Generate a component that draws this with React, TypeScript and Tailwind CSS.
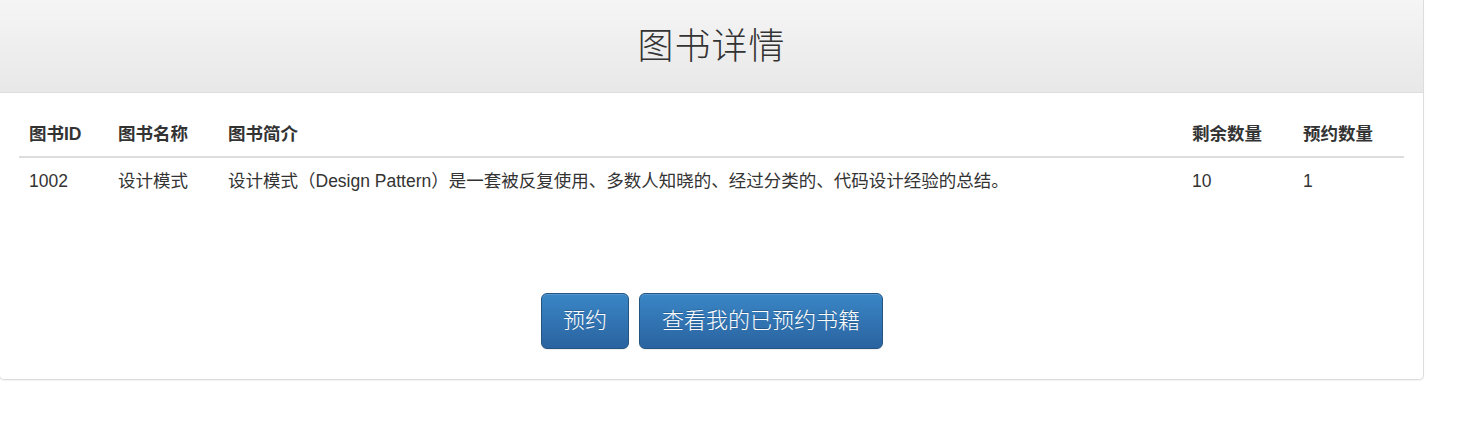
export default function App() {
  const font = "font-['Liberation_Sans','Noto_Sans_CJK_SC',sans-serif]";
  const btn =
    "h-[56px] rounded-[6px] border border-[#245580] bg-gradient-to-b from-[#3a86c6] to-[#2a63a0] text-white text-[22px] font-light leading-none [text-shadow:0_-1px_0_rgba(0,0,0,0.2)] shadow-[inset_0_1px_0_rgba(255,255,255,0.15),0_1px_1px_rgba(0,0,0,0.075)]";
  return (
    <div className={`${font} bg-white min-h-[428px] text-[#333]`}>
      <div className="ml-[-1px] w-[1425px] bg-white border border-t-0 border-[#ddd] rounded-b-[5px] shadow-[0_1px_1px_rgba(0,0,0,0.05)]">
        <div className="h-[93px] border-b border-[#ddd] bg-gradient-to-b from-[#f5f5f5] to-[#e8e8e8] flex items-center justify-center">
          <h2 className="text-[36px] font-light leading-none tracking-[1px] text-[#333] pt-[2px]">图书详情</h2>
        </div>
        <div className="px-[19px] pt-[19px] pb-[30px]">
          <table className="w-[1385px] border-collapse table-fixed text-[17.5px] leading-[25px]">
            <colgroup>
              <col className="w-[89px]" />
              <col className="w-[110px]" />
              <col className="w-[964px]" />
              <col className="w-[111px]" />
              <col className="w-[111px]" />
            </colgroup>
            <thead>
              <tr className="border-b-2 border-[#ddd]">
                <th className="text-left font-bold px-[10px] pt-[10px] pb-[9px]">图书ID</th>
                <th className="text-left font-bold px-[10px] pt-[10px] pb-[9px]">图书名称</th>
                <th className="text-left font-bold px-[10px] pt-[10px] pb-[9px]">图书简介</th>
                <th className="text-left font-bold px-[10px] pt-[10px] pb-[9px]">剩余数量</th>
                <th className="text-left font-bold px-[10px] pt-[10px] pb-[9px]">预约数量</th>
              </tr>
            </thead>
            <tbody>
              <tr>
                <td className="px-[10px] pt-[11px] pb-[9px]">1002</td>
                <td className="px-[10px] pt-[11px] pb-[9px]">设计模式</td>
                <td className="px-[10px] pt-[11px] pb-[9px] whitespace-nowrap">设计模式（Design Pattern）是一套被反复使用、多数人知晓的、经过分类的、代码设计经验的总结。</td>
                <td className="px-[10px] pt-[11px] pb-[9px]">10</td>
                <td className="px-[10px] pt-[11px] pb-[9px]">1</td>
              </tr>
            </tbody>
          </table>
          <div className="mt-[90px] flex justify-center gap-[10px] pl-[1px]">
            <button className={`${btn} px-[21px]`}>预约</button>
            <button className={`${btn} px-[22px]`}>查看我的已预约书籍</button>
          </div>
        </div>
      </div>
    </div>
  );
}
